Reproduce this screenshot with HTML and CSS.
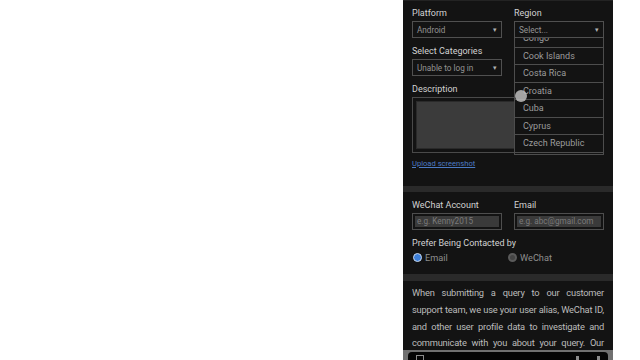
FILE: index.html
```html
<!DOCTYPE html>
<html>
<head>
<meta charset="utf-8">
<link rel="stylesheet" href="styles.css">
</head>
<body>
<div class="page">
  <div class="panel">
    <section class="card form">
      <div class="field">
        <div class="label">Platform</div>
        <div class="select"><span>Android</span><span class="arrow">▾</span></div>
      </div>
      <div class="field">
        <div class="label">Region</div>
        <div class="select"><span>Select...</span><span class="arrow">▾</span></div>
      </div>
      <div class="field">
        <div class="label">Select Categories</div>
        <div class="select"><span>Unable to log in</span><span class="arrow">▾</span></div>
      </div>
      <div class="field wide">
        <div class="label">Description</div>
        <div class="textarea"><div class="textarea-inner"></div></div>
      </div>
      <a class="upload wide" href="#">Upload screenshot</a>
    </section>
    <div class="sep"></div>
    <section class="card contact">
      <div class="field">
        <div class="label">WeChat Account</div>
        <div class="input"><div class="input-inner">e.g. Kenny2015</div></div>
      </div>
      <div class="field">
        <div class="label">Email</div>
        <div class="input"><div class="input-inner">e.g. abc@gmail.com</div></div>
      </div>
      <div class="field wide">
        <div class="label">Prefer Being Contacted by</div>
        <div class="radios">
          <label class="radio"><span class="dot checked"></span>Email</label>
          <label class="radio"><span class="dot"></span>WeChat</label>
        </div>
      </div>
    </section>
    <div class="sep sep2"></div>
    <section class="card policy">
      <p>
        <span class="line">When submitting a query to our customer</span>
        <span class="line">support team, we use your user alias, WeChat ID,</span>
        <span class="line">and other user profile data to investigate and</span>
        <span class="line">communicate with you about your query. Our</span>
        <span class="line">customer support team may be located outside</span>
      </p>
    </section>

    <div class="dropdown">
      <ul class="options">
        <li>Congo</li>
        <li>Cook Islands</li>
        <li>Costa Rica</li>
        <li>Croatia</li>
        <li>Cuba</li>
        <li>Cyprus</li>
        <li>Czech Republic</li>
      </ul>
    </div>
    <div class="touch"></div>

    <div class="bottombar">
      <div class="bottombar-inner">
        <span class="bb-square"></span>
        <span class="bb-spacer"></span>
        <span class="bb-mark"></span>
        <span class="bb-mark"></span>
      </div>
    </div>
  </div>
</div>
</body>
</html>
```

FILE: styles.css
```css
html, body {
  margin: 0;
  padding: 0;
  height: 100%;
}
body {
  background: #ffffff;
  overflow: hidden;
  font-family: Roboto, "Noto Sans", "Liberation Sans", sans-serif;
}
.page {
  display: flex;
  height: 360px;
  padding-left: 403px;
}
.panel {
  position: relative;
  width: 210px;
  height: 360px;
  background: #131313;
  border-top: 1px solid #232323;
  box-sizing: border-box;
  overflow: hidden;
}
.card {
  padding: 0 9px;
  display: grid;
  grid-template-columns: 90px 90px;
  column-gap: 12px;
  align-content: start;
}
.form {
  padding-top: 6px;
  height: 185px;
  row-gap: 7px;
  box-sizing: border-box;
}
.wide {
  grid-column: 1 / span 2;
}
.field {
  display: flex;
  flex-direction: column;
}
.label {
  font-size: 9px;
  line-height: 12px;
  color: #d2d2d2;
  margin-bottom: 2px;
  white-space: nowrap;
}
.select {
  height: 17px;
  box-sizing: border-box;
  border: 1px solid #505050;
  display: flex;
  align-items: center;
  justify-content: space-between;
  padding: 0 4px 0 4px;
  font-size: 8.2px;
  color: #949494;
}
.arrow {
  font-size: 7px;
  color: #b0b0b0;
}
.textarea {
  height: 56px;
  box-sizing: border-box;
  border: 1px solid #4a4a4a;
  padding: 3px;
  display: flex;
}
.textarea-inner {
  flex: 1;
  background: #3b3b3b;
  border: 1px solid #2a2a2a;
}
.upload {
  font-size: 7.6px;
  line-height: 10px;
  color: #4c7bc4;
  text-decoration: underline;
  margin-top: -1px;
}
.sep {
  height: 6px;
  background: #2a2a2a;
}
.sep2 {
  height: 7px;
}
.contact {
  padding-top: 7px;
  height: 82px;
  box-sizing: border-box;
  row-gap: 7px;
}
.input {
  height: 17px;
  box-sizing: border-box;
  border: 1px solid #4e4e4e;
  padding: 2px;
  display: flex;
}
.input-inner {
  flex: 1;
  background: #3a3a3a;
  font-size: 8.2px;
  line-height: 11px;
  color: #7a7a7a;
  padding-left: 2px;
  white-space: nowrap;
  overflow: hidden;
}
.radios {
  display: grid;
  grid-template-columns: 96px 90px;
  height: 12px;
  align-items: center;
}
.radio {
  display: flex;
  align-items: center;
  font-size: 9.2px;
  color: #8e8e8e;
  gap: 3px;
}
.radio:first-child {
  padding-left: 1px;
}
.dot {
  width: 9px;
  height: 9px;
  border-radius: 50%;
  box-sizing: border-box;
  background: #444;
  border: 2px solid #5a5a5a;
}
.dot.checked {
  background: #3d7fd8;
  border: 1.5px solid #c9d9ee;
}
.policy {
  display: block;
  padding-top: 4px;
}
.policy p {
  margin: 0;
  font-size: 9.3px;
  line-height: 16.8px;
  color: #bcbcbc;
}
.line {
  display: block;
  white-space: nowrap;
  text-align: justify;
  text-align-last: justify;
  letter-spacing: -0.2px;
}
.dropdown {
  position: absolute;
  left: 111px;
  top: 37px;
  width: 90px;
  height: 117px;
  box-sizing: border-box;
  border: 1px solid #4d4d4d;
  border-top: none;
  background: #131313;
  overflow: hidden;
}
.options {
  list-style: none;
  margin: -8px 0 0 0;
  padding: 0;
}
.options li {
  height: 17.5px;
  box-sizing: border-box;
  border-bottom: 1px solid #4d4d4d;
  font-size: 9px;
  line-height: 16.5px;
  color: #9c9c9c;
  padding-left: 8px;
  white-space: nowrap;
}
.touch {
  position: absolute;
  left: 112px;
  top: 89px;
  width: 12px;
  height: 12px;
  border-radius: 50%;
  background: rgba(190, 190, 190, 0.85);
}
.bottombar {
  position: absolute;
  left: 0;
  right: 0;
  bottom: 0;
  height: 10px;
  background: #707070;
  padding: 2px 5px 0 5px;
  box-sizing: border-box;
}
.bottombar-inner {
  height: 100%;
  background: #050505;
  border-radius: 4px 4px 0 0;
  display: flex;
  align-items: flex-end;
  padding: 0 8px;
  gap: 18px;
}
.bb-square {
  width: 6px;
  height: 4px;
  border: 1px solid #8a8a8a;
  border-bottom: none;
}
.bb-spacer {
  flex: 1;
}
.bb-mark {
  width: 3px;
  height: 4px;
  background: #8a8a8a;
}
```
